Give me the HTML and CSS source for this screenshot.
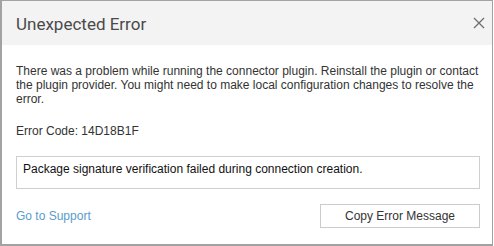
FILE: index.html
```html
<!DOCTYPE html>
<html>
<head>
<meta charset="utf-8">
<link rel="stylesheet" href="styles.css">
</head>
<body>
<div class="dialog">
  <div class="header">
    <div class="title">Unexpected Error</div>
    <svg class="close" width="12" height="12" viewBox="0 0 12 12"><path d="M1 1 L11 11 M11 1 L1 11" stroke="#6e6e6e" stroke-width="1.3" fill="none"/></svg>
  </div>
  <div class="body">
    <p class="desc">There was a problem while running the connector plugin. Reinstall the plugin or contact the plugin provider. You might need to make local configuration changes to resolve the error.</p>
    <p class="code">Error Code: 14D18B1F</p>
    <div class="message">Package signature verification failed during connection creation.</div>
    <div class="footer">
      <a class="link">Go to Support</a>
      <button class="btn">Copy Error Message</button>
    </div>
  </div>
</div>
</body>
</html>
```
FILE: styles.css
```css
html, body { margin: 0; padding: 0; background: #fff; }
.dialog {
  border: 1px solid #a2a2a2;
  border-left-width: 2px;
  border-bottom-width: 2px;
  box-sizing: border-box;
  width: 493px;
  height: 246px;
  background: #fff;
  font-family: "Liberation Sans", Arial, sans-serif;
  font-size: 12px;
  color: #333;
  display: flex;
  flex-direction: column;
}
.header {
  height: 44px;
  background: #f3f3f3;
  display: flex;
  align-items: center;
  justify-content: space-between;
  padding: 0 7px 0 14px;
  box-sizing: border-box;
}
.title {
  font-family: Roboto, "Liberation Sans", sans-serif;
  font-size: 17px;
  color: #4a4a4a;
  padding-top: 1px;
}
.close { display: block; margin-top: -1px; }
.body {
  padding: 0 12px 0 14px;
}
.desc {
  margin: 19px 0 0;
  line-height: 14px;
}
.code {
  margin: 18px 0 0;
  line-height: 14px;
}
.message {
  margin-top: 18px;
  border: 1px solid #cfcfcf;
  height: 33px;
  box-sizing: border-box;
  padding: 5px 6px 0;
  line-height: 14px;
  color: #111;
}
.footer {
  margin-top: 15px;
  display: flex;
  justify-content: space-between;
  align-items: center;
}
.link {
  color: #5a9ccc;
  font-size: 12px;
}
.btn {
  width: 160px;
  height: 24px;
  border: 1px solid #cccccc;
  background: #fff;
  font-family: "Liberation Sans", Arial, sans-serif;
  font-size: 12px;
  color: #333;
  padding: 0;
}
```
